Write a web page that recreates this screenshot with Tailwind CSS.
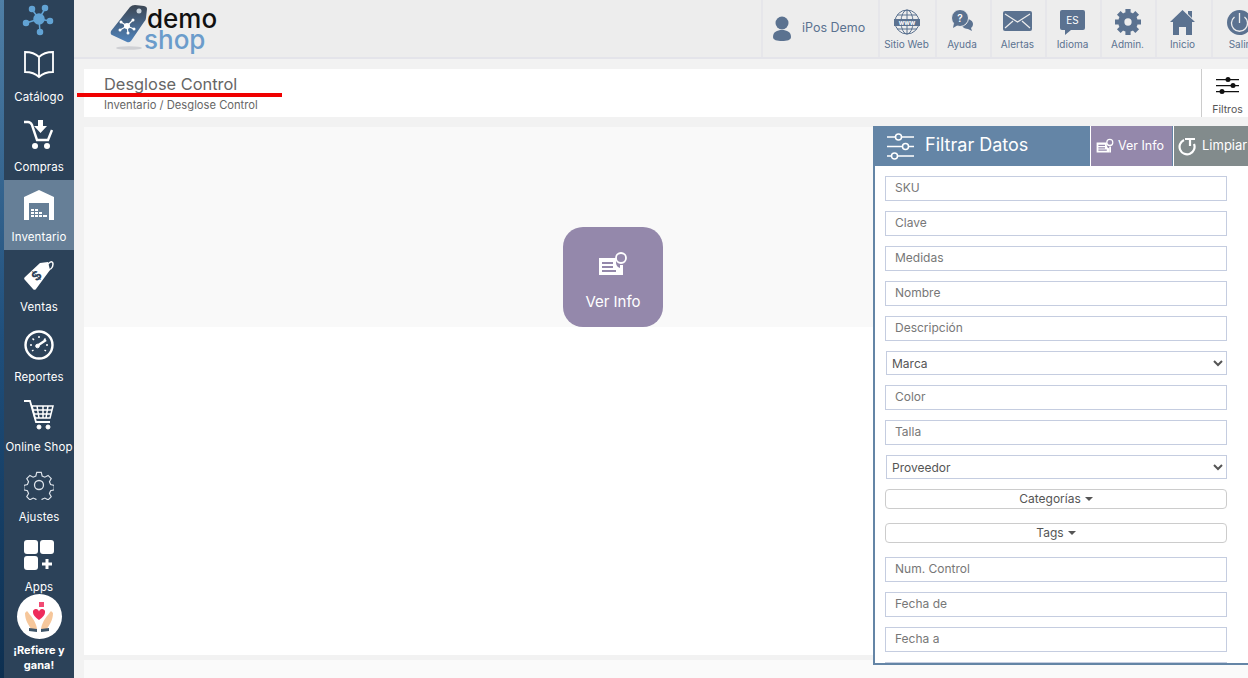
<!DOCTYPE html>
<html lang="en">
<head>
  <meta charset="UTF-8">
  <title>Desglose Control</title>
  <script src="https://cdn.jsdelivr.net/npm/@tailwindcss/browser@4"></script>
</head>
<body class="bg-[#f2f2f2] font-['Inter',sans-serif] text-[#555] overflow-hidden">
  <div class="relative flex w-[1248px] h-[678px] overflow-hidden">
    <!-- ocean strip + sidebar -->
    <div class="w-1 h-full bg-gradient-to-b from-[#4f7fa6] via-[#1f4f7c] to-[#0d2f50]"></div>
    <aside class="w-[70px] h-full bg-[#2c4259] text-white text-[11.5px] tracking-[0.1px] relative shrink-0 whitespace-nowrap">
      <div class="h-10 flex justify-center pt-[3px]">
        <svg class="w-[34px] h-[34px]" viewBox="0 0 34 32" fill="#62a3d4" stroke="#62a3d4" stroke-width="1.5"><path d="M17 15 9 4M17 15 24 3M17 15 4 19M17 15 28 17M17 15 18 28" /><circle cx="17" cy="15" r="5"/><circle cx="10" cy="5" r="2.5"/><circle cx="23" cy="4" r="2.5"/><circle cx="4" cy="19" r="2.5"/><circle cx="28" cy="17" r="2.5"/><circle cx="18" cy="28" r="2.5"/></svg>
      </div>
      <a class="h-[70px] flex flex-col items-center">
        <svg class="w-[30px] h-[30px] mt-[9px]" viewBox="0 0 30 30" fill="none" stroke="#fff" stroke-width="1.8"><path d="M15 8C11 4 6 3 1 3v20c5 0 10 1 14 5 4-4 9-5 14-5V3c-5 0-10 1-14 5v20"/></svg>
        <span class="mt-[11px] leading-[14px]">Catálogo</span>
      </a>
      <a class="h-[70px] flex flex-col items-center">
        <svg class="w-[30px] h-[30px] mt-[10px]" viewBox="0 0 30 30" fill="#fff"><path d="M0 2h4c2 0 3 1 4 3l5 15h11l4-10" fill="none" stroke="#fff" stroke-width="2.4"/><path d="M14 0h5v6h4l-6.500 7L10 6h4z"/><circle cx="11" cy="26" r="3"/><circle cx="23" cy="26" r="3"/></svg>
        <span class="mt-[10px] leading-[14px]">Compras</span>
      </a>
      <a class="h-[70px] flex flex-col items-center bg-[#667f97]">
        <svg class="w-[30px] h-[30px] mt-[10px]" viewBox="0 0 30 30" fill="#fff"><path d="M0 7 15 0l15 7v23h-5V13H5v17H0z"/><path d="M7 19h3v2H7zM11 19h3v2h-3zM7 22h3v2H7zM11 22h3v2h-3zM15 22h3v2h-3zM7 25h3v2H7zM11 25h3v2h-3zM15 25h3v2h-3zM19 25h4v2h-4z"/></svg>
        <span class="mt-[10px] leading-[14px]">Inventario</span>
      </a>
      <a class="h-[70px] flex flex-col items-center">
        <svg class="w-[30px] h-[30px] mt-[10px]" viewBox="0 0 30 30"><path d="M1 17 16 3l8-1 2 8-14 19a2 2 0 0 1-3 0L1 20a2 2 0 0 1 0-3z" fill="#fff"/><path d="M22 7c2-5 7-7 7-3s-3 6-6 6" fill="none" stroke="#fff" stroke-width="1.500"/><text x="9" y="21" transform="rotate(-45 12 17)" font-size="13" font-weight="700" fill="#2c4259">$</text></svg>
        <span class="mt-[10px] leading-[14px]">Ventas</span>
      </a>
      <a class="h-[70px] flex flex-col items-center">
        <svg class="w-[30px] h-[30px] mt-[10px]" viewBox="0 0 30 30" fill="none" stroke="#fff"><circle cx="15" cy="15" r="13.500" stroke-width="2.400"/><path d="M15 6v2M8.500 8.500l1.500 1.500M6 15h2M22 15h2M21.500 8.500 20 10M8 21l1.500-1M22 21l-1.500-1" stroke-width="1.500"/><path d="M13 16l9-6" stroke-width="2.400"/><circle cx="13.500" cy="16" r="1.800" fill="#fff"/></svg>
        <span class="mt-[10px] leading-[14px]">Reportes</span>
      </a>
      <a class="h-[70px] flex flex-col items-center">
        <svg class="w-[30px] h-[30px] mt-[10px]" viewBox="0 0 30 30" fill="none" stroke="#fff"><path d="M0 1h6l6 21h14" stroke-width="1.800"/><path d="M8 6h21l-3 12H11zM13 6l2 12M19 6v12M24 6l-2 12M9 10h19M10 14h17" stroke-width="1.500"/><circle cx="15" cy="27" r="2" fill="#fff"/><circle cx="24" cy="27" r="2" fill="#fff"/></svg>
        <span class="mt-[10px] leading-[14px]">Online Shop</span>
      </a>
      <a class="h-[70px] flex flex-col items-center">
        <svg class="w-[30px] h-[30px] mt-[10px]" viewBox="0 0 30 30" fill="none" stroke="#dde3ea" stroke-width="1.300"><path d="M12.500 1h5l1 4 3 1.300 3.600-2 3.500 3.500-2 3.600 1.300 3 4 1v5l-4 1-1.300 3 2 3.600-3.500 3.500-3.600-2-3 1.300-1 4h-5l-1-4-3-1.300-3.600 2-3.500-3.500 2-3.600-1.300-3-4-1v-5l4-1 1.300-3-2-3.600 3.500-3.500 3.600 2 3-1.300z" transform="translate(1.500 1.500) scale(.9)"/><circle cx="15" cy="15" r="4.500"/></svg>
        <span class="mt-[10px] leading-[14px]">Ajustes</span>
      </a>
      <a class="h-[70px] flex flex-col items-center">
        <svg class="w-[30px] h-[30px] mt-[10px]" viewBox="0 0 30 30" fill="#fff"><rect width="14" height="14" rx="3"/><rect x="16" width="14" height="14" rx="3"/><rect y="16" width="14" height="14" rx="3"/><path d="M21.500 19h3v3.500H28v3h-3.500V29h-3v-3.500H18v-3h3.500z"/></svg>
        <span class="mt-[10px] leading-[14px]">Apps</span>
      </a>
      <!-- refer badge sits over the Apps item -->
      <div class="absolute left-0 top-[594px] w-[70px] flex flex-col items-center">
        <div class="w-[45px] h-[45px] rounded-full bg-white flex items-center justify-center">
          <svg class="w-[30px] h-[32px]" viewBox="0 0 30 32"><path d="M15 19c-4-3-6-5-6-7.500a3 3 0 0 1 6-1 3 3 0 0 1 6 1C21 14 19 16 15 19z" fill="#ee2b5b"/><path d="M15 1h5v5h-5z" fill="#ee2b5b" opacity=".85"/><path d="M3 10c3 4 9 10 10 18H7C5 24 1 20 1 12z" fill="#f6c79b"/><path d="M27 10c-3 4-9 10-10 18h6c2-4 6-8 6-16z" fill="#f6c79b"/><path d="M5 27l8 1v3l-8-1zM25 27l-8 1v3l8-1z" fill="#3d5468"/></svg>
        </div>
        <div class="mt-[4px] text-[11px] font-bold tracking-normal leading-[15px] text-center">¡Refiere y<br>gana!</div>
      </div>
    </aside>

    <div class="flex-1 min-w-0 flex flex-col">
      <!-- top header -->
      <header class="h-[59px] bg-[#ededed] border-b-2 border-[#e4e4ea] flex shrink-0 text-[#5b7290] overflow-hidden whitespace-nowrap">
        <div class="w-[687px] shrink-0 pl-[35px] flex items-start pt-[2px]">
          <svg class="w-[40px] h-[50px] shrink-0" viewBox="0 0 40 50"><defs><linearGradient id="tag" x1="0" y1="0" x2="0" y2="1"><stop offset="0" stop-color="#3c4653"/><stop offset="1" stop-color="#5083bb"/></linearGradient></defs><path d="M2 29 21 5q2-2 5-2l9 1q3 .5 3 3l-1 9q0 2-2 4L22 39q-2 2-4 1L3 33q-2-1-1-4z" fill="url(#tag)"/><circle cx="30" cy="9" r="2.500" fill="#c9d3dc"/><path d="M18 24 12 20M18 24l6-6M18 24l-7 4M18 24l7 3M18 24l1 7" stroke="#fff" stroke-width="1.200"/><circle cx="18" cy="24" r="3" fill="#fff"/><circle cx="12" cy="20" r="1.500" fill="#fff"/><circle cx="24" cy="18" r="1.500" fill="#fff"/><circle cx="11" cy="28" r="1.500" fill="#fff"/><circle cx="25" cy="27" r="1.500" fill="#fff"/><circle cx="19" cy="31" r="1.500" fill="#fff"/><ellipse cx="20" cy="46" rx="13" ry="1.800" fill="#cfd0d4"/></svg>
          <div class="-ml-[5px] mt-[6px] leading-none">
            <div class="text-[26px] ml-[3px] text-[#111] leading-[21px] font-medium">demo</div>
            <div class="text-[26px] text-[#6b9ccb] leading-[21px] font-medium">shop</div>
          </div>
        </div>
        <div class="w-[117px] shrink-0 border-l-2 border-[#e6e6ea] flex items-center pl-[9px] gap-[10px] text-[12.5px]">
          <svg class="w-[20px] h-[26px]" viewBox="0 0 20 26" fill="#5b7290"><circle cx="10" cy="7" r="6.500"/><path d="M1 21c0-5 4-7 9-7s9 2 9 7c0 3-4 4-9 4s-9-1-9-4z"/></svg>
          <span>iPos Demo</span>
        </div>
        <div class="w-[57px] shrink-0 border-l-2 border-[#e6e6ea] flex flex-col items-center pt-[9px] pr-[2px] text-[10px]">
          <svg class="w-[26px] h-[26px]" viewBox="0 0 26 26" fill="none" stroke="#5b7290"><circle cx="13" cy="13" r="12"/><ellipse cx="13" cy="13" rx="6" ry="12"/><path d="M13 1v24M3 6h20M3 20h20"/><rect x="0" y="10" width="26" height="7" fill="#5b7290" stroke="none"/><text x="13" y="16" text-anchor="middle" font-size="6.500" font-weight="700" fill="#fff" stroke="none">www</text></svg>
          <span class="mt-[3px] leading-[13px]">Sitio Web</span>
        </div>
        <div class="w-[55px] shrink-0 border-l-2 border-[#e6e6ea] flex flex-col items-center pt-[10px] pr-[3px] text-[10px]">
          <svg class="w-[22px] h-[22px]" viewBox="0 0 22 22" fill="#5b7290"><path d="M15 9c4 0 7 2 7 5 0 2-1 3-2 4l1 3-4-2c-2 0-5-1-6-3z"/><circle cx="9" cy="8" r="8.500" stroke="#ededed"/><path d="M3 13l-1 5 5-3z"/><text x="9" y="12" text-anchor="middle" font-size="10" font-weight="600" fill="#fff">?</text></svg>
          <span class="mt-[6px] leading-[13px]">Ayuda</span>
        </div>
        <div class="w-[55px] shrink-0 border-l-2 border-[#e6e6ea] flex flex-col items-center pt-[11px] pr-[2px] text-[10px]">
          <svg class="w-[29px] h-[20px]" viewBox="0 0 29 20"><rect width="29" height="20" rx="2" fill="#5b7290"/><path d="M2 3l12.500 8L27 3M2 17l8-7M27 17l-8-7" fill="none" stroke="#ededed" stroke-width="1.200"/></svg>
          <span class="mt-[7px] leading-[13px]">Alertas</span>
        </div>
        <div class="w-[55px] shrink-0 border-l-2 border-[#e6e6ea] flex flex-col items-center pt-[10px] pr-[2px] text-[10px]">
          <div class="relative w-[25px] h-[20px] bg-[#5b7290] rounded-[2px] text-white text-[10px] leading-[20px] text-center mb-[5px]">ES<span class="absolute left-[5px] top-[20px] border-t-[5px] border-r-[6px] border-t-[#5b7290] border-r-transparent"></span></div>
          <span class="mt-[3px] leading-[13px]">Idioma</span>
        </div>
        <div class="w-[55px] shrink-0 border-l-2 border-[#e6e6ea] flex flex-col items-center pt-[9px] pr-[2px] text-[10px]">
          <svg class="w-[26px] h-[26px]" viewBox="0 0 25 25" fill="#5b7290"><circle cx="12.500" cy="12.500" r="6.500" fill="none" stroke="#5b7290" stroke-width="6"/><path d="M10 0h5v5h-5zM10 20h5v5h-5zM0 10h5v5H0zM20 10h5v5h-5z"/><path d="M10 0h5v5h-5zM10 20h5v5h-5zM0 10h5v5H0zM20 10h5v5h-5z" transform="rotate(45 12.500 12.500)"/></svg>
          <span class="mt-[3px] leading-[13px]">Admin.</span>
        </div>
        <div class="w-[56px] shrink-0 border-l-2 border-[#e6e6ea] flex flex-col items-center pt-[10px] pr-[3px] text-[10px]">
          <svg class="w-[25px] h-[25px]" viewBox="0 0 25 25" fill="#5b7290"><path d="M12.500 0 25 12h-3v13h-6v-8H9v8H3V12H0zM18 1h4v7l-4-4z"/></svg>
          <span class="mt-[3px] leading-[13px]">Inicio</span>
        </div>
        <div class="w-[56px] shrink-0 border-l-2 border-[#e6e6ea] flex flex-col items-center pt-[10px] pr-[2px] text-[10px]">
          <svg class="w-[25px] h-[25px]" viewBox="0 0 25 25" fill="none"><circle cx="12.500" cy="12.500" r="12.500" fill="#5b7290"/><path d="M7.500 7a8 8 0 1 0 10 0M12.500 3v10" stroke="#ededed" stroke-width="1.300"/></svg>
          <span class="mt-[3px] leading-[13px]">Salir</span>
        </div>
      </header>

      <!-- page title -->
      <div class="mt-[10px] ml-[10px] h-[48px] bg-white flex shrink-0">
        <div class="flex-1 pl-[20px] pt-[5px]">
          <h1 class="text-[16.4px] leading-[20px] text-[#666]">Desglose Control</h1>
          <p class="text-[11.2px] leading-[14px] mt-[4px] text-[#666]">Inventario / Desglose Control</p>
        </div>
        <div class="w-[47px] border-l border-[#ccc] flex flex-col items-center pt-[6px] pl-[5px] text-[10.5px]">
          <svg class="w-[23px] h-[22px]" viewBox="0 0 23 20" fill="#111"><path d="M0 3h23v1.300H0zM0 9h23v1.300H0zM0 15h23v1.300H0z"/><circle cx="12" cy="3.500" r="2.500"/><circle cx="17" cy="9.500" r="2.500"/><circle cx="6" cy="15.500" r="2.500"/></svg>
          <span class="mt-[6px] leading-[13px] text-[#555]">Filtros</span>
        </div>
      </div>

      <!-- content -->
      <div class="mt-[10px] ml-[10px] h-[200px] bg-[#f9f9f9] shrink-0 flex items-end pl-[479px]">
        <div class="w-[100px] h-[100px] rounded-[20px] bg-[#9488ab] text-white flex flex-col items-center pt-[24px]">
          <svg class="w-[30px] h-[26px]" viewBox="0 0 30 26" fill="#fff"><path d="M1 7h17v5a6 6 0 0 0 4 5v7H1zM4 11v2h11v-2zM4 15v2h11v-2zM4 19v2h14v-2z" fill-rule="evenodd"/><circle cx="23" cy="7" r="5" fill="none" stroke="#fff" stroke-width="1.800"/><path d="M22 14h3v10h-3z"/></svg>
          <span class="mt-[15px] text-[15px] leading-[20px]">Ver Info</span>
        </div>
      </div>
      <div class="ml-[10px] h-[328px] bg-white shrink-0"></div>
      <div class="mt-[5px] ml-[10px] flex-1 bg-[#fafafa]"></div>
    </div>

    <!-- filter panel overlays the content -->
    <aside class="absolute left-[873px] top-[126px] w-[375px] h-[539px] bg-white border-l-2 border-b-2 border-[#6485a6] overflow-hidden">
      <div class="h-10 flex bg-[#6485a6] text-white -ml-[2px]">
        <div class="w-[217px] flex items-center pl-[14px] gap-[11px] text-[18px] pb-[3px]">
          <svg class="w-[27px] h-[27px] mt-[3px]" viewBox="0 0 27 27" fill="none" stroke="#fff" stroke-width="1.500"><path d="M0 4h8M15 4h12M0 13.500h15M22 13.500h5M0 23h4M11 23h16"/><circle cx="11.500" cy="4" r="3"/><circle cx="18.500" cy="13.500" r="3"/><circle cx="7.500" cy="23" r="3"/></svg>
          <span>Filtrar Datos</span>
        </div>
        <div class="w-[82px] bg-[#9488ab] border-l border-white flex items-center pl-[5px] gap-[4px] text-[12.5px]">
          <svg class="w-[18px] h-[16px]" viewBox="0 0 30 26" fill="#fff"><path d="M1 7h17v5a6 6 0 0 0 4 5v7H1zM4 11v2h11v-2zM4 15v2h11v-2zM4 19v2h14v-2z" fill-rule="evenodd"/><circle cx="23" cy="7" r="5" fill="none" stroke="#fff" stroke-width="2"/><path d="M22 14h3v10h-3z"/></svg>
          <span>Ver Info</span>
        </div>
        <div class="ml-px flex-1 bg-[#828b8c] border-l border-white flex items-center pl-[4px] gap-[5px] text-[13px] whitespace-nowrap overflow-hidden">
          <svg class="w-[19px] h-[19px] shrink-0" viewBox="0 0 19 19" fill="none" stroke="#fff" stroke-width="2.200"><path d="M6 3a7.500 7.500 0 1 0 10 4"/><path d="M7 2h10M12 2v7"/></svg>
          <span>Limpiar</span>
        </div>
      </div>
      <form class="pl-[10px] pt-[10px] w-[352px] flex flex-col gap-[10px] text-[12px]">
        <input placeholder="SKU" class="h-[25px] shrink-0 border border-[#c5cde0] px-[9px] pb-[2px] placeholder:text-[#777]">
        <input placeholder="Clave" class="h-[25px] shrink-0 border border-[#c5cde0] px-[9px] pb-[2px] placeholder:text-[#777]">
        <input placeholder="Medidas" class="h-[25px] shrink-0 border border-[#c5cde0] px-[9px] pb-[2px] placeholder:text-[#777]">
        <input placeholder="Nombre" class="h-[25px] shrink-0 border border-[#c5cde0] px-[9px] pb-[2px] placeholder:text-[#777]">
        <input placeholder="Descripción" class="h-[25px] shrink-0 border border-[#c5cde0] px-[9px] pb-[2px] placeholder:text-[#777]">
        <select class="h-[24px] ml-px shrink-0 border border-[#c5cde0] px-[1px] text-[#555]"><option>Marca</option></select>
        <input placeholder="Color" class="h-[25px] shrink-0 border border-[#c5cde0] px-[9px] pb-[2px] placeholder:text-[#777]">
        <input placeholder="Talla" class="h-[25px] shrink-0 border border-[#c5cde0] px-[9px] pb-[2px] placeholder:text-[#777]">
        <select class="h-[24px] ml-px shrink-0 border border-[#c5cde0] px-[1px] text-[#555]"><option>Proveedor</option></select>
        <button type="button" class="h-5 shrink-0 border border-[#ccc] rounded-[4px] text-[12px] leading-none text-[#555] flex items-center justify-center gap-1">Categorías <span class="border-x-[4px] border-t-[4px] border-x-transparent border-t-[#555]"></span></button>
        <button type="button" class="h-5 mt-[4px] shrink-0 border border-[#ccc] rounded-[4px] text-[12px] leading-none text-[#555] flex items-center justify-center gap-1">Tags <span class="border-x-[4px] border-t-[4px] border-x-transparent border-t-[#555]"></span></button>
        <input placeholder="Num. Control" class="h-[25px] mt-[4px] shrink-0 border border-[#c5cde0] px-[9px] pb-[2px] placeholder:text-[#777]">
        <input placeholder="Fecha de" class="h-[25px] shrink-0 border border-[#c5cde0] px-[9px] pb-[2px] placeholder:text-[#777]">
        <input placeholder="Fecha a" class="h-[25px] shrink-0 border border-[#c5cde0] px-[9px] pb-[2px] placeholder:text-[#777]">
        <input class="h-[25px] shrink-0 border border-[#c5cde0] px-[9px]">
      </form>
    </aside>

    <!-- red marker drawn over the title -->
    <div class="absolute left-[77px] top-[93px] w-[205px] h-1 bg-[#f00000]"></div>
  </div>
</body>
</html>
